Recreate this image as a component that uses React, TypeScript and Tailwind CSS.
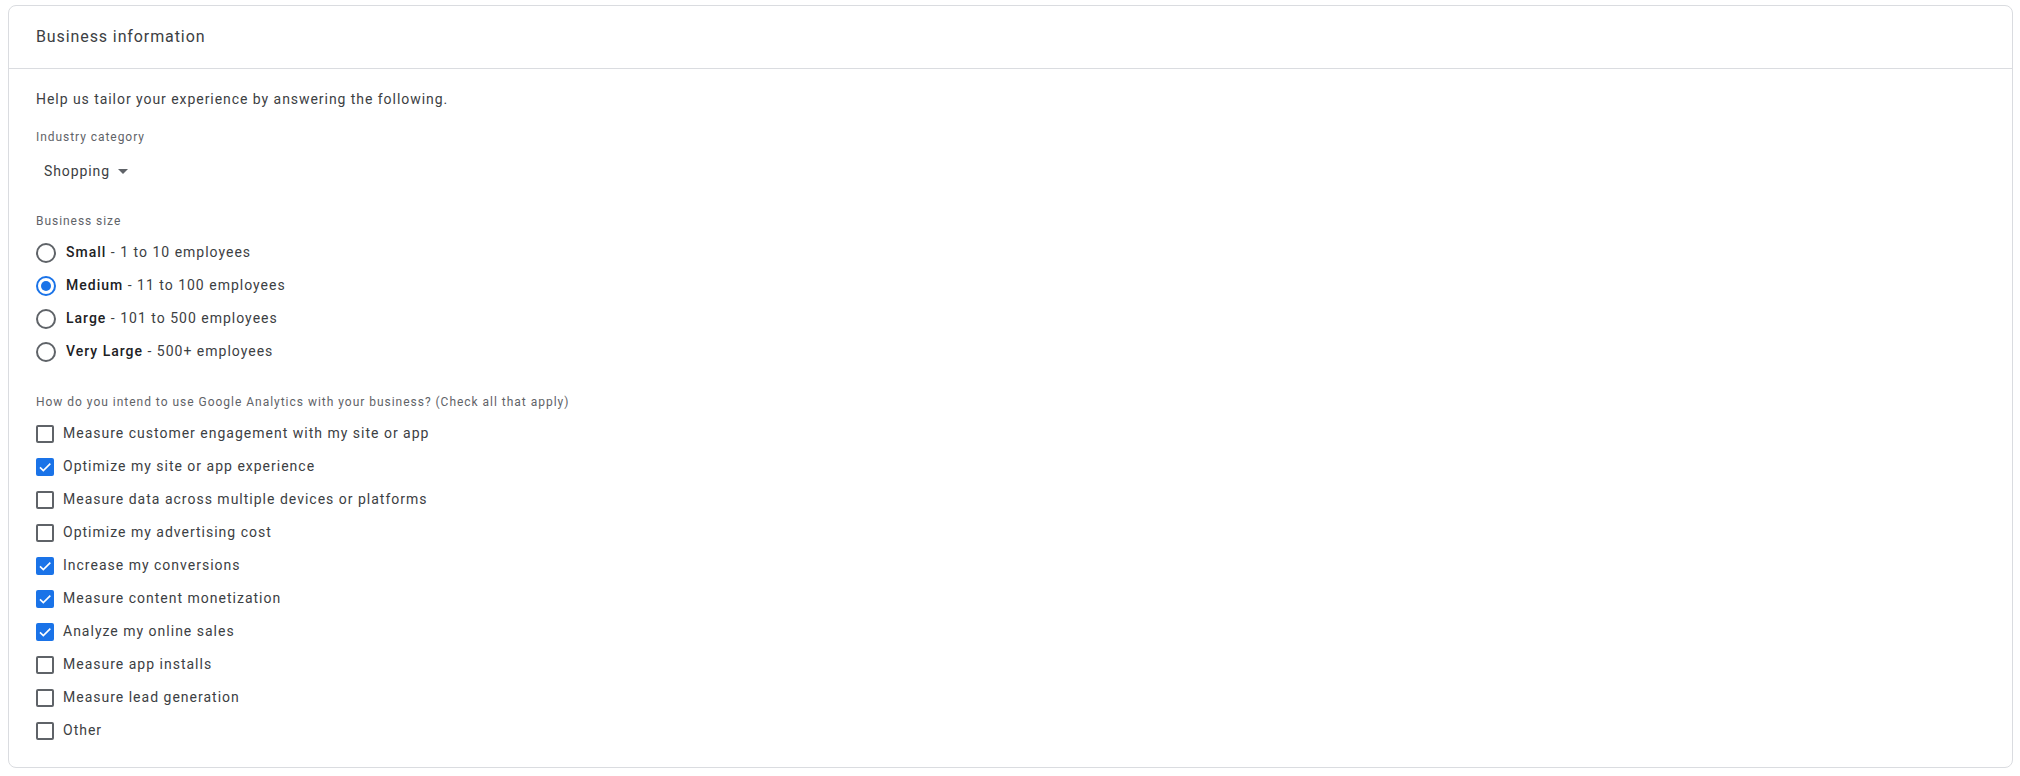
const sizes = [
  { name: "Small", detail: "1 to 10 employees", checked: false },
  { name: "Medium", detail: "11 to 100 employees", checked: true },
  { name: "Large", detail: "101 to 500 employees", checked: false },
  { name: "Very Large", detail: "500+ employees", checked: false },
];

const uses = [
  { label: "Measure customer engagement with my site or app", checked: false },
  { label: "Optimize my site or app experience", checked: true },
  { label: "Measure data across multiple devices or platforms", checked: false },
  { label: "Optimize my advertising cost", checked: false },
  { label: "Increase my conversions", checked: true },
  { label: "Measure content monetization", checked: true },
  { label: "Analyze my online sales", checked: true },
  { label: "Measure app installs", checked: false },
  { label: "Measure lead generation", checked: false },
  { label: "Other", checked: false },
];

const Radio: React.FC<{ checked: boolean }> = ({ checked }) => (
  <span
    className={
      checked
        ? "flex items-center justify-center w-[20px] h-[20px] rounded-full border-2 border-[#1a73e8]"
        : "flex items-center justify-center w-[20px] h-[20px] rounded-full border-2 border-[#5f6368]"
    }
  >
    {checked && <span className="w-[10px] h-[10px] rounded-full bg-[#1a73e8]" />}
  </span>
);

const Checkbox: React.FC<{ checked: boolean }> = ({ checked }) =>
  checked ? (
    <span className="flex items-center justify-center w-[18px] h-[18px] rounded-[2px] bg-[#1a73e8]">
      <svg viewBox="0 0 24 24" className="w-[16px] h-[16px]" fill="none">
        <path d="M4.5 12.5l5 5L20 7" stroke="#fff" strokeWidth="2.4" />
      </svg>
    </span>
  ) : (
    <span className="w-[18px] h-[18px] rounded-[2px] border-2 border-[#5f6368]" />
  );

export default function App() {
  return (
    <div className="min-h-[776px] bg-white pt-[5px] pl-[8px] pr-[7px] pb-[8px] font-['Roboto',sans-serif]">
      <div className="border border-[#dadce0] rounded-[8px]">
        <div className="h-[63px] flex items-center px-[27px] border-b border-[#dadce0] text-[16px] tracking-[0.9px] text-[#3c4043]">
          Business information
        </div>
        <div className="px-[27px] pt-[20px] pb-[20px]">
          <p className="text-[14px] leading-[20px] tracking-[0.95px] text-[#3c4043]">
            Help us tailor your experience by answering the following.
          </p>

          <div className="mt-[20px] text-[12px] leading-[16px] tracking-[0.95px] text-[#5f6368]">Industry category</div>
          <div className="mt-[16px] ml-[8px] flex items-center h-[20px] text-[14px] tracking-[0.9px] text-[#3c4043]">
            Shopping
            <span className="ml-[8px] w-0 h-0 border-x-[5px] border-x-transparent border-t-[5px] border-t-[#5f6368]" />
          </div>

          <div className="mt-[32px] text-[12px] leading-[16px] tracking-[0.95px] text-[#5f6368]">Business size</div>
          <div className="mt-[7px] flex flex-col">
            {sizes.map((s) => (
              <label key={s.name} className="h-[33px] flex items-center gap-[10px] text-[14px] tracking-[1px] text-[#3c4043]">
                <Radio checked={s.checked} />
                <span>
                  <span className="font-medium text-[#202124]">{s.name}</span> - {s.detail}
                </span>
              </label>
            ))}
          </div>

          <div className="mt-[26px] text-[12px] leading-[16px] tracking-[0.98px] text-[#5f6368]">
            How do you intend to use Google Analytics with your business? (Check all that apply)
          </div>
          <div className="mt-[7px] flex flex-col">
            {uses.map((u) => (
              <label key={u.label} className="h-[33px] flex items-center gap-[9px] text-[14px] tracking-[1px] text-[#3c4043]">
                <Checkbox checked={u.checked} />
                <span>{u.label}</span>
              </label>
            ))}
          </div>
        </div>
      </div>
    </div>
  );
}
